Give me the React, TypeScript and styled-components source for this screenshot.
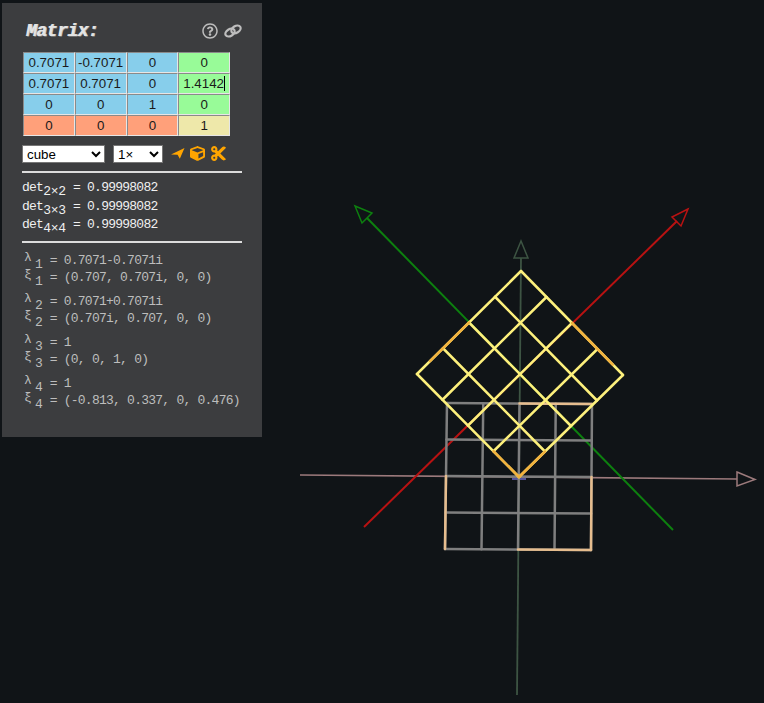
import React from "react";
import styled, { createGlobalStyle } from "styled-components";
import { FaRegQuestionCircle, FaCube, FaCut } from "react-icons/fa";

const Global = createGlobalStyle`
  html, body { margin: 0; padding: 0; background: #101417; overflow: hidden; }
  #root { width: 764px; height: 703px; }
`;

const Stage = styled.div`
  position: relative;
  width: 764px;
  height: 703px;
  padding: 3px 0 0 2px;
  box-sizing: border-box;
  background: #101417;
`;

const Scene = styled.svg`
  position: absolute;
  left: 0;
  top: 0;
`;

const Panel = styled.section`
  position: relative;
  box-sizing: border-box;
  width: 260px;
  height: 434px;
  padding: 16px 20px 0 20px;
  background: #3c3d3f;
`;

const Header = styled.header`
  display: flex;
  align-items: center;
  justify-content: space-between;
  height: 23px;
  padding: 0 0 0 4px;
`;

const Title = styled.h1`
  margin: 0;
  font: italic bold 18px "Liberation Mono", monospace;
  letter-spacing: -0.5px;
  color: #e4e4e4;
  text-shadow: 1px 0 0 #c8c8c8, 1px 1px 0 #6e6e6e;
`;

const HeaderIcons = styled.div`
  display: flex;
  align-items: center;
  gap: 6px;
  color: #bdbdbd;
  font-size: 16px;
`;

const MatrixGrid = styled.div`
  display: grid;
  grid-template-columns: repeat(4, 51.75px);
  grid-auto-rows: 21px;
  width: 207px;
  margin: 10px 0 0 1px;
`;

const kinds: Record<string, string> = {
  rot: "#87ceeb",
  trans: "#98fb98",
  persp: "#ffa07a",
  scale: "#eee8aa",
};

const Cell = styled.div<{ $kind: string }>`
  box-sizing: border-box;
  display: flex;
  align-items: center;
  justify-content: center;
  border: 1px solid #e6e6e6;
  border-top-color: #8a8a8a;
  border-left-color: #8a8a8a;
  background: ${(p) => kinds[p.$kind]};
  color: #1a1a1a;
  font: 13.33px "Liberation Sans", Arial, sans-serif;
`;

const Caret = styled.span`
  display: inline-block;
  width: 1px;
  height: 15px;
  background: #000;
`;

const Controls = styled.div`
  display: flex;
  align-items: center;
  margin-top: 8px;
  height: 19px;
`;

const Select = styled.select<{ $w: number }>`
  box-sizing: border-box;
  width: ${(p) => p.$w}px;
  height: 18px;
  margin-right: 8px;
  padding: 0;
  border: 1px solid #767676;
  border-radius: 0;
  background: #fff;
  color: #000;
  font: 13.33px "Liberation Sans", Arial, sans-serif;
`;

const Tools = styled.div`
  display: flex;
  align-items: center;
  gap: 5px;
  color: #ffa500;
  font-size: 15px;
`;

const Rule = styled.hr<{ $top: number }>`
  height: 2px;
  width: 220px;
  margin: ${(p) => p.$top}px 0 0 0;
  border: 0;
  background: #dcdcdc;
`;

const Dets = styled.div`
  margin-top: 6px;
  color: #f0f0f0;
`;

const MathLine = styled.div<{ $h: number }>`
  height: ${(p) => p.$h}px;
  font: 13px/${(p) => p.$h}px "Liberation Mono", monospace;
  letter-spacing: -0.76px;
  white-space: pre;
`;

const Sub = styled.sub`
  font-size: 13px;
  letter-spacing: -0.2px;
  line-height: 0;
  vertical-align: -4px;
`;

const Eigens = styled.div`
  margin-top: 9px;
  color: #bdbdbd;
`;

const EigenGroup = styled.div`
  margin-bottom: 7px;
`;

const Sym = styled.span`
  display: inline-block;
  width: 13px;
  padding-left: 2px;
  box-sizing: border-box;
  font-size: 13px;
  vertical-align: 3px;
  line-height: 0;
`;

const IconSvg = styled.svg`
  display: block;
  flex: none;
`;

type P = [number, number];
const top: P = [521, 271], right: P = [623, 375], left: P = [417, 374], bottom: P = [519, 477];

function pt(u: number, v: number): P {
  const a = u / 4, b = v / 4;
  return [
    top[0] * (1 - a) * (1 - b) + right[0] * a * (1 - b) + left[0] * (1 - a) * b + bottom[0] * a * b,
    top[1] * (1 - a) * (1 - b) + right[1] * a * (1 - b) + left[1] * (1 - a) * b + bottom[1] * a * b,
  ];
}

const sTL: P = [447, 403], sTR: P = [592, 404], sBL: P = [445, 549], sBR: P = [591, 550];
function sq(u: number, v: number): P {
  const a = u / 4, b = v / 4;
  return [
    sTL[0] * (1 - a) * (1 - b) + sTR[0] * a * (1 - b) + sBL[0] * (1 - a) * b + sBR[0] * a * b,
    sTL[1] * (1 - a) * (1 - b) + sTR[1] * a * (1 - b) + sBL[1] * (1 - a) * b + sBR[1] * a * b,
  ];
}

const Seg = ({ a, b, c, w = 2.5 }: { a: P; b: P; c: string; w?: number }) => (
  <line x1={a[0]} y1={a[1]} x2={b[0]} y2={b[1]} stroke={c} strokeWidth={w} strokeLinecap="round" />
);

const YEL = "#fdf07c";
const ORG = "#f2b23e";
const GRY = "#7f7f7f";
const TAN = "#e6bd8e";

function SceneArt() {
  const idx = [0, 1, 2, 3, 4];
  return (
    <Scene width={764} height={703} viewBox="0 0 764 703">
      <line x1={300} y1={475} x2={737} y2={479} stroke="#9c7a7c" strokeWidth={1.6} />
      <polygon points="737,472 755,479.5 737,486" fill="none" stroke="#9c7a7c" strokeWidth={1.5} />
      <line x1={521} y1={258} x2={517} y2={695} stroke="#3d5443" strokeWidth={1.8} />
      <polygon points="521,241 514,258 528,258" fill="none" stroke="#3d5443" strokeWidth={1.5} />
      <line x1={364} y1={527} x2={677} y2={221} stroke="#b81212" strokeWidth={2} />
      <polygon points="688,209 672,217 681,226" fill="none" stroke="#b81212" strokeWidth={1.5} />
      <line x1={673} y1={530} x2={367} y2={218} stroke="#0d800f" strokeWidth={2} />
      <polygon points="355,206 372,213 362,223" fill="none" stroke="#0d800f" strokeWidth={1.5} />
      <line x1={512} y1={479} x2={526} y2={479} stroke="#54549a" strokeWidth={2} />

      {idx.map((i) => (
        <React.Fragment key={i}>
          <Seg a={sq(i, 0)} b={sq(i, 4)} c={GRY} />
          <Seg a={sq(0, i)} b={sq(4, i)} c={GRY} />
        </React.Fragment>
      ))}
      <Seg a={sq(2, 0)} b={sq(4, 0)} c={TAN} />
      <Seg a={sq(0, 2)} b={sq(0, 4)} c={TAN} />
      <Seg a={sq(4, 2)} b={sq(4, 4)} c={TAN} />
      <Seg a={sq(2, 4)} b={sq(4, 4)} c={TAN} />

      {idx.map((i) => (
        <React.Fragment key={i}>
          <Seg a={pt(i, 0)} b={pt(i, 4)} c={YEL} />
          <Seg a={pt(0, i)} b={pt(4, i)} c={YEL} />
        </React.Fragment>
      ))}
      <Seg a={pt(0, 2)} b={pt(0, 3.5)} c={ORG} />
      <Seg a={pt(2, 0)} b={pt(3.6, 0)} c={ORG} />
      <Seg a={pt(4, 3)} b={pt(4, 4)} c={ORG} />
      <Seg a={pt(3, 4)} b={pt(4, 4)} c={ORG} />
    </Scene>
  );
}

const LinkIcon = () => (
  <IconSvg width={18} height={14} viewBox="0 0 18 14" fill="none" stroke="currentColor" strokeWidth={2.2}>
    <ellipse cx={6} cy={8.6} rx={5} ry={3.4} transform="rotate(-32 6 8.6)" />
    <ellipse cx={12} cy={5.4} rx={5} ry={3.4} transform="rotate(-32 12 5.4)" />
  </IconSvg>
);

const ArrowIcon = () => (
  <IconSvg width={14} height={11} viewBox="0 0 14 11">
    <polygon points="13.5,0 0,6.4 6.6,6.8 8.8,10.8" fill="currentColor" />
  </IconSvg>
);

const matrix: [string, string][][] = [
  [["0.7071", "rot"], ["-0.7071", "rot"], ["0", "rot"], ["0", "trans"]],
  [["0.7071", "rot"], ["0.7071", "rot"], ["0", "rot"], ["1.4142", "trans"]],
  [["0", "rot"], ["0", "rot"], ["1", "rot"], ["0", "trans"]],
  [["0", "persp"], ["0", "persp"], ["0", "persp"], ["1", "scale"]],
];

const eigen = [
  ["0.7071-0.7071i", "(0.707, 0.707i, 0, 0)"],
  ["0.7071+0.7071i", "(0.707i, 0.707, 0, 0)"],
  ["1", "(0, 0, 1, 0)"],
  ["1", "(-0.813, 0.337, 0, 0.476)"],
];

export default function App() {
  return (
    <Stage>
      <Global />
      <SceneArt />
      <Panel>
        <Header>
          <Title>Matrix:</Title>
          <HeaderIcons>
            <FaRegQuestionCircle />
            <LinkIcon />
          </HeaderIcons>
        </Header>
        <MatrixGrid>
          {matrix.flat().map(([v, k], i) => (
            <Cell key={i} $kind={k}>
              {v}
              {i === 7 && <Caret />}
            </Cell>
          ))}
        </MatrixGrid>
        <Controls>
          <Select $w={83} defaultValue="cube">
            <option value="cube">cube</option>
          </Select>
          <Select $w={50} defaultValue="1">
            <option value="1">1×</option>
          </Select>
          <Tools>
            <ArrowIcon />
            <FaCube />
            <FaCut size={17} />
          </Tools>
        </Controls>
        <Rule $top={8} />
        <Dets>
          {[2, 3, 4].map((n) => (
            <MathLine key={n} $h={18.5}>
              det<Sub>{n}×{n}</Sub> = 0.99998082
            </MathLine>
          ))}
        </Dets>
        <Rule $top={6} />
        <Eigens>
          {eigen.map(([l, x], i) => (
            <EigenGroup key={i}>
              <MathLine $h={17}>
                <Sym>λ</Sym><Sub>{i + 1}</Sub> = {l}
              </MathLine>
              <MathLine $h={17}>
                <Sym>ξ</Sym><Sub>{i + 1}</Sub> = {x}
              </MathLine>
            </EigenGroup>
          ))}
        </Eigens>
      </Panel>
    </Stage>
  );
}
